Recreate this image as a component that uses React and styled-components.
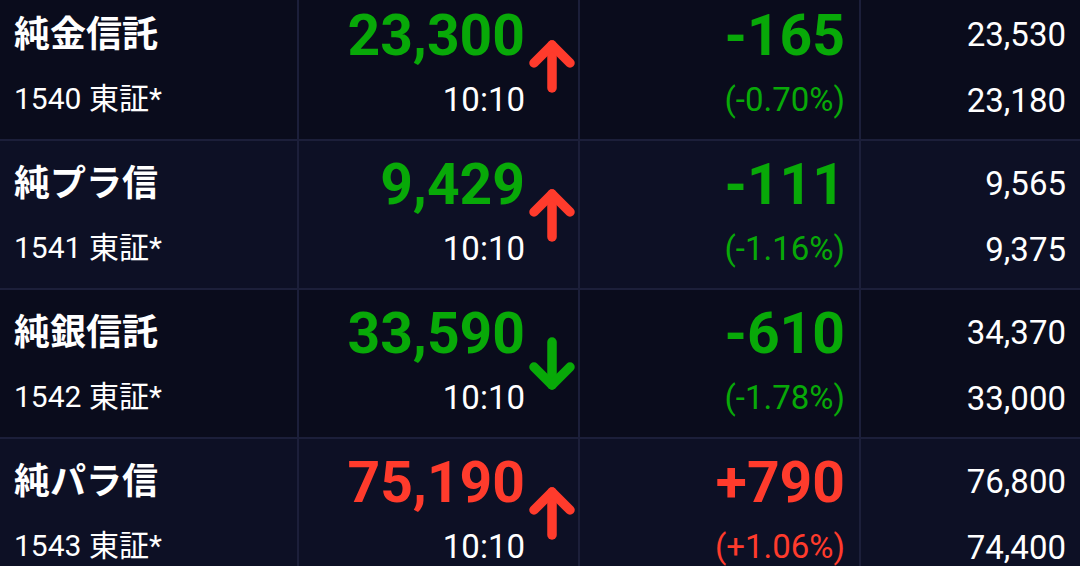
import React from 'react'
import styled, { createGlobalStyle } from 'styled-components'

const GREEN = '#08a908'
const RED = '#ff3b2c'

const GlobalStyle = createGlobalStyle`
  html, body {
    margin: 0;
    padding: 0;
    background: #0a0c1c;
    overflow: hidden;
  }
  body {
    width: 1080px;
    height: 566px;
    font-family: Roboto, "Noto Sans CJK JP", sans-serif;
    color: #ffffff;
  }
`

const List = styled.div`
  margin-top: -8px;
  display: flex;
  flex-direction: column;
`

const Row = styled.div`
  display: grid;
  grid-template-columns: 299px 281px 281px 1fr;
  height: 149px;
  box-sizing: border-box;
  border-bottom: 2px solid #1c1f3a;
  background: ${({ $alt }) => ($alt ? '#0d1025' : '#0a0c1c')};
`

const Cell = styled.div`
  box-sizing: border-box;
  border-right: ${({ $last }) => ($last ? 'none' : '2px solid #1c1f3a')};
  padding: 14px 14px 0 14px;
  display: flex;
  flex-direction: column;
  align-items: ${({ $left }) => ($left ? 'flex-start' : 'flex-end')};
  text-align: ${({ $left }) => ($left ? 'left' : 'right')};
`

const PriceCell = styled.div`
  box-sizing: border-box;
  border-right: 2px solid #1c1f3a;
  display: flex;
  align-items: center;
`

const PriceText = styled.div`
  flex: 1;
  align-self: stretch;
  padding-top: 14px;
  display: flex;
  flex-direction: column;
  align-items: flex-end;
`

const ArrowBox = styled.div`
  width: 53px;
  display: flex;
  justify-content: center;
`

const Name = styled.div`
  font-family: "Noto Sans CJK JP", sans-serif;
  font-weight: 700;
  font-size: 36px;
  line-height: 50px;
  height: 60px;
  color: #ffffff;
`

const Code = styled.div`
  font-size: 30px;
  line-height: 32px;
  height: 32px;
  margin-top: 17px;
  color: #ffffff;
`

const Big = styled.div`
  font-weight: 700;
  font-size: 57px;
  line-height: 60px;
  height: 60px;
  color: ${({ $color }) => $color};
`

const Small = styled.div`
  font-size: 33px;
  line-height: 32px;
  height: 32px;
  margin-top: 18px;
  color: ${({ $color }) => $color || '#ffffff'};
`

const Range = styled.div`
  font-size: 33px;
  line-height: ${({ $top }) => ($top ? '58px' : '32px')};
  height: ${({ $top }) => ($top ? '60px' : '32px')};
  margin-top: ${({ $top }) => ($top ? '0' : '19px')};
  color: #ffffff;
`

const Arrow = ({ dir, color }) => (
  <svg width="46" height="60" viewBox="0 0 46 60">
    {dir === 'up' ? (
      <g fill="none" stroke={color} strokeWidth="9.5" strokeLinecap="round" strokeLinejoin="round">
        <path d="M23 9 L23 52" />
        <path d="M5 27 L23 9 L41 27" />
      </g>
    ) : (
      <g fill="none" stroke={color} strokeWidth="9.5" strokeLinecap="round" strokeLinejoin="round">
        <path d="M23 8 L23 51" />
        <path d="M5 33 L23 51 L41 33" />
      </g>
    )}
  </svg>
)

const rows = [
  { name: '純金信託', code: '1540 東証*', price: '23,300', pColor: GREEN, dir: 'up', aColor: RED, time: '10:10', chg: '-165', pct: '(-0.70%)', cColor: GREEN, high: '23,530', low: '23,180' },
  { name: '純プラ信', code: '1541 東証*', price: '9,429', pColor: GREEN, dir: 'up', aColor: RED, time: '10:10', chg: '-111', pct: '(-1.16%)', cColor: GREEN, high: '9,565', low: '9,375' },
  { name: '純銀信託', code: '1542 東証*', price: '33,590', pColor: GREEN, dir: 'down', aColor: GREEN, time: '10:10', chg: '-610', pct: '(-1.78%)', cColor: GREEN, high: '34,370', low: '33,000' },
  { name: '純パラ信', code: '1543 東証*', price: '75,190', pColor: RED, dir: 'up', aColor: RED, time: '10:10', chg: '+790', pct: '(+1.06%)', cColor: RED, high: '76,800', low: '74,400' },
]

export default function App() {
  return (
    <>
      <GlobalStyle />
      <List>
        {rows.map((r, i) => (
          <Row key={r.code} $alt={i % 2 === 1}>
            <Cell $left>
              <Name>{r.name}</Name>
              <Code>{r.code}</Code>
            </Cell>
            <PriceCell>
              <PriceText>
                <Big $color={r.pColor}>{r.price}</Big>
                <Small>{r.time}</Small>
              </PriceText>
              <ArrowBox>
                <Arrow dir={r.dir} color={r.aColor} />
              </ArrowBox>
            </PriceCell>
            <Cell>
              <Big $color={r.cColor}>{r.chg}</Big>
              <Small $color={r.cColor}>{r.pct}</Small>
            </Cell>
            <Cell $last>
              <Range $top>{r.high}</Range>
              <Range>{r.low}</Range>
            </Cell>
          </Row>
        ))}
      </List>
    </>
  )
}
